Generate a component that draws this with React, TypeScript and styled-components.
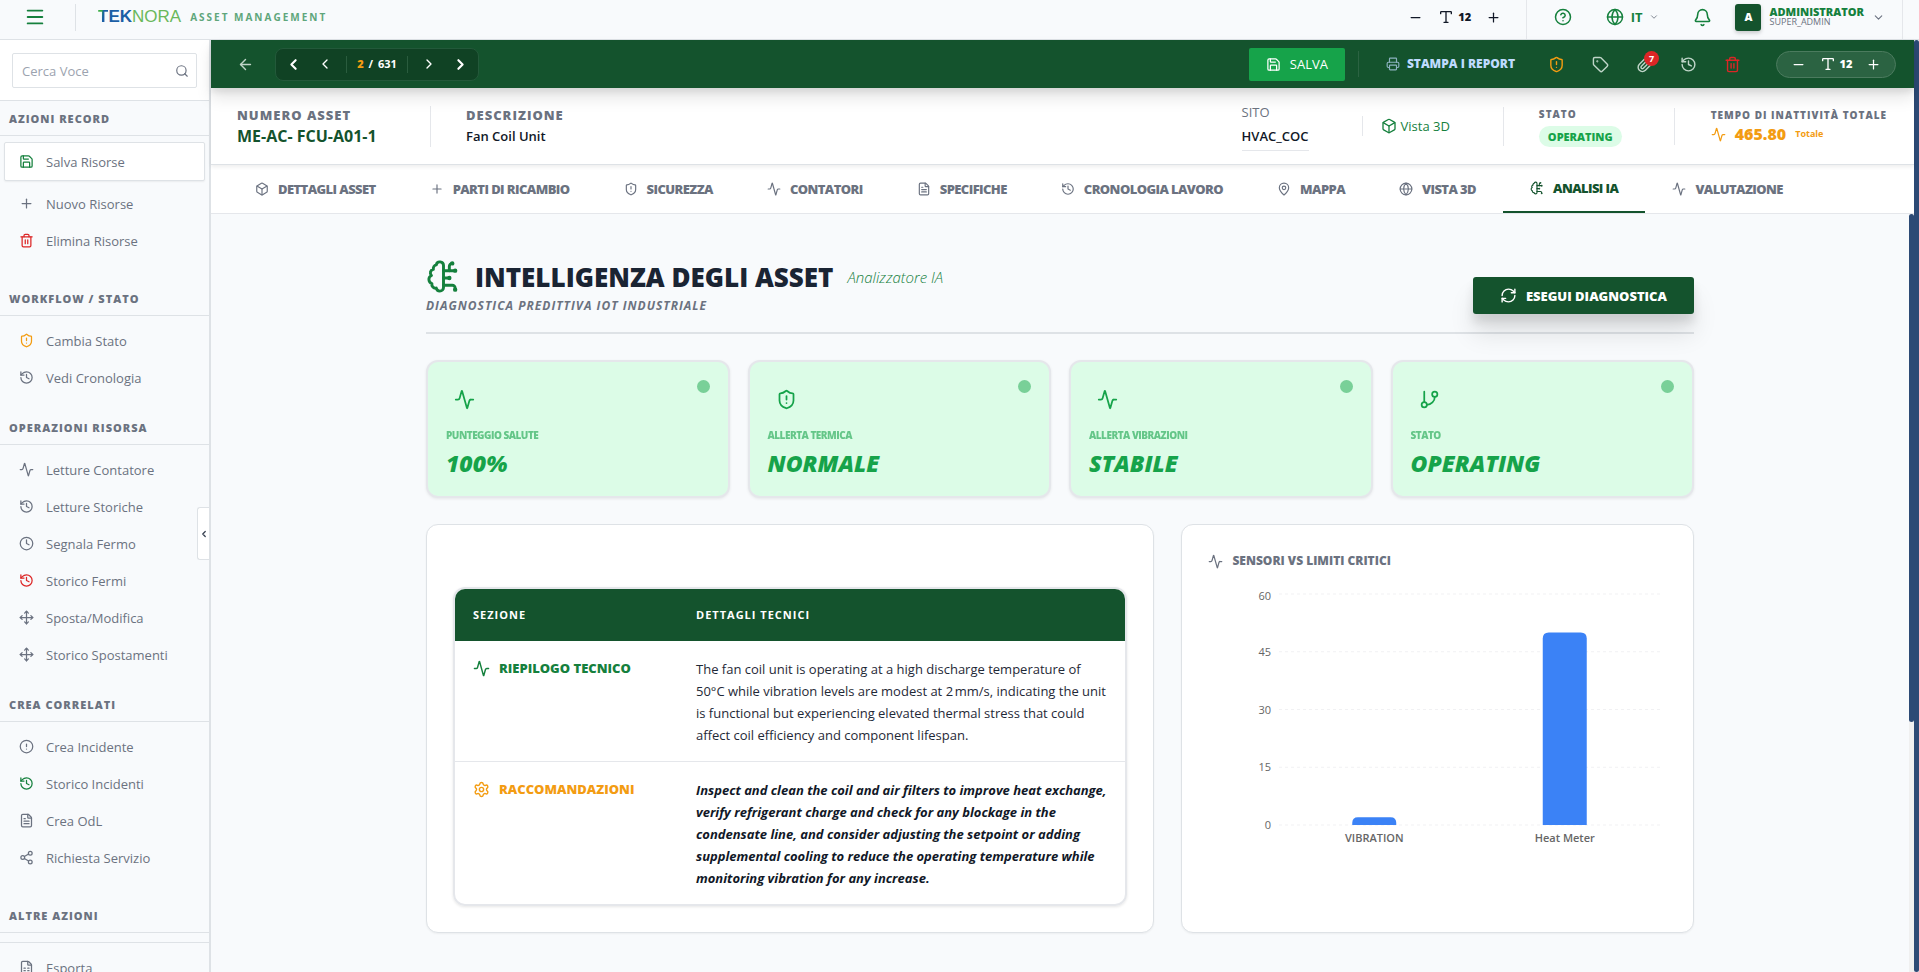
import React from 'react';
import styled, { createGlobalStyle, css } from 'styled-components';
import {
  Activity, ArrowLeft, Bell, Box, ChevronDown, ChevronLeft, ChevronRight, CircleAlert, CircleHelp, Clock,
  FileSpreadsheet, FileText, GitBranch, Globe, History, MapPin, Menu, Minus, Move, Paperclip, Plus,
  Printer, RefreshCw, Save, Search, Settings, Share2, ShieldAlert, Tag, Trash2, Type,
} from 'lucide-react';

const c = {
  deep: '#14532d',
  green: '#15803d',
  bright: '#16a34a',
  mint: '#dcfce7',
  page: '#f8fafc',
  line: '#dee2e6',
  soft: '#e5e7eb',
  muted: '#6b7280',
  ink: '#111827',
  amber: '#f39c12',
  red: '#dc2626',
  navy: '#2c4a75',
};

const GlobalStyle = createGlobalStyle`
  *, *::before, *::after { box-sizing: border-box; }
  body { margin: 0; background: ${c.page}; color: ${c.ink}; font-family: "Open Sans", sans-serif; font-size: 13px; line-height: 20px; }
  h1, h2, p { margin: 0; }
  button { font: inherit; color: inherit; background: none; border: 0; padding: 0; cursor: pointer; }
  a { color: inherit; text-decoration: none; }
  svg { flex: none; display: block; }
`;

const Shell = styled.div`
  display: flex;
  flex-direction: column;
  height: 100vh;
  overflow: hidden;
`;

/* ---------- top bar ---------- */

const TopBar = styled.header`
  display: flex;
  flex: none;
  height: 40px;
  padding-right: 16px;
  background: ${c.page};
  border-bottom: 1px solid ${c.line};
`;

const Brand = styled.div`
  display: flex;
  align-items: center;
  flex: 1;
  padding: 0 0 5px 24px;
`;

const IconButton = styled.button<{ $color?: string; $size?: number }>`
  display: inline-flex;
  align-items: center;
  justify-content: center;
  position: relative;
  width: ${p => p.$size ?? 22}px;
  height: ${p => p.$size ?? 22}px;
  color: ${p => p.$color ?? 'inherit'};
`;

const Rule = styled.span<{ $h: number; $color?: string; $margin?: string }>`
  flex: none;
  width: 1px;
  height: ${p => p.$h}px;
  margin: ${p => p.$margin ?? 0};
  background: ${p => p.$color ?? c.soft};
`;

const Logo = styled.a`
  display: flex;
  align-items: center;
  gap: 9px;
`;

const LogoWord = styled.span`
  font-family: "Liberation Sans", sans-serif;
  font-size: 17px;
  color: #6ab85a;

  b {
    color: #1b5fa6;
  }

  b:first-child {
    background: linear-gradient(100deg, #3fae49 30%, #1b5fa6 50%);
    background-clip: text;
    color: transparent;
  }
`;

const Tagline = styled.span`
  font-size: 10px;
  font-weight: 700;
  letter-spacing: 2px;
  color: #5fa67b;
`;

const TopGroup = styled.div<{ $pad: string; $gap: number }>`
  display: flex;
  align-items: center;
  gap: ${p => p.$gap}px;
  padding: ${p => p.$pad};
  color: ${c.green};
  border-right: 1px solid ${c.soft};
`;

const SizeControl = styled.div<{ $pill?: boolean }>`
  display: flex;
  align-items: center;
  justify-content: space-between;
  width: 120px;
  height: 27px;
  padding: 0 10px;
  color: ${c.ink};
  ${p => p.$pill && css`
    color: #fff;
    background: #2b6342;
    border: 1px solid #4b7b5e;
    border-radius: 14px;
  `}
`;

const SizeValue = styled.span`
  display: flex;
  align-items: center;
  gap: 4px;
  font-size: 11px;
  font-weight: 800;
`;

const Language = styled.button`
  display: flex;
  align-items: center;
  gap: 7px;
  margin: 0 10px;
  font-weight: 700;

  svg:last-child { color: ${c.muted}; }
`;

const User = styled.button`
  display: flex;
  align-items: center;
  gap: 8px;
  text-align: left;

  > svg { color: ${c.muted}; }
`;

const Avatar = styled.span`
  display: grid;
  place-items: center;
  width: 26px;
  height: 27px;
  border-radius: 3px;
  background: ${c.deep};
  color: #fff;
  font-size: 11px;
  font-weight: 800;
  box-shadow: 0 2px 4px rgba(0, 0, 0, 0.2);
`;

const UserName = styled.span`
  display: grid;
  font-size: 11px;
  line-height: 10px;
  font-weight: 800;

  small {
    font-size: 9px;
    font-weight: 500;
    color: ${c.muted};
  }
`;

/* ---------- sidebar ---------- */

const Body = styled.div`
  display: flex;
  flex: 1;
  min-height: 0;
`;

const Sidebar = styled.aside`
  position: relative;
  flex: none;
  width: 211px;
  overflow: hidden;
  border-right: 2px solid ${c.line};
  background: ${c.page};
`;

const SearchPanel = styled.div`
  padding: 13px 12px 12px;
  background: #fff;
  border-bottom: 1px solid ${c.line};
`;

const SearchField = styled.label`
  display: flex;
  align-items: center;
  height: 35px;
  padding: 0 7px 0 9px;
  border: 1px solid ${c.line};
  border-radius: 2px;
  color: ${c.muted};

  input {
    flex: 1;
    min-width: 0;
    padding: 0;
    border: 0;
    outline: 0;
    background: none;
    font: inherit;
  }

  input::placeholder { color: #9ca3af; }
`;

const GroupTitle = styled.h2`
  height: 35px;
  padding: 0 9px;
  border-bottom: 1px solid ${c.line};
  color: ${c.muted};
  font-size: 11px;
  line-height: 35px;
  font-weight: 800;
  letter-spacing: 1px;
`;

const GroupList = styled.div<{ $roomy?: boolean }>`
  display: flex;
  flex-direction: column;
  padding: 6px 4px ${p => (p.$roomy ? 22 : 14)}px 4px;
`;

const GroupDivider = styled.hr`
  margin: 9px 0 0;
  border: 0;
  border-top: 1px solid ${c.line};
`;

const SideItem = styled.button<{ $active?: boolean }>`
  display: flex;
  align-items: center;
  gap: 12px;
  height: 37px;
  padding: 0 14px;
  border: 1px solid transparent;
  color: ${c.muted};
  font-weight: 500;

  ${p => p.$active && css`
    height: 39px;
    margin-bottom: 4px;
    background: #fff;
    border-color: ${c.line};
    border-radius: 2px;
    box-shadow: 0 1px 2px rgba(0, 0, 0, 0.06);
  `}
`;

const Collapse = styled.button`
  position: absolute;
  right: 0;
  top: 467px;
  display: grid;
  place-items: center;
  width: 12px;
  height: 53px;
  background: #fff;
  border: 1px solid ${c.line};
  border-right: 0;
  border-radius: 3px 0 0 3px;
  color: #374151;
`;

/* ---------- record header ---------- */

const Main = styled.main`
  display: flex;
  flex-direction: column;
  flex: 1;
  min-width: 0;
`;

const ActionBar = styled.div`
  position: relative;
  z-index: 2;
  display: flex;
  align-items: center;
  flex: none;
  height: 48px;
  padding: 0 18px 0 25px;
  background: ${c.deep};
  color: #bfd5c8;
  box-shadow: 0 10px 15px rgba(0, 0, 0, 0.1), 0 4px 6px rgba(0, 0, 0, 0.08);
`;

const Pager = styled.div`
  display: flex;
  align-items: center;
  justify-content: space-between;
  width: 204px;
  height: 33px;
  margin-left: 21px;
  padding: 0 6px;
  border: 1px solid #23593a;
  border-radius: 8px;
  background: #104224;
  color: #fff;
`;

const PageCount = styled.span`
  font-size: 11px;
  font-weight: 700;
  word-spacing: 2px;

  b { color: ${c.amber}; }
`;

const Spacer = styled.div`
  flex: 1;
`;

const SaveButton = styled.button`
  display: flex;
  align-items: center;
  gap: 9px;
  height: 33px;
  padding: 0 17px;
  border-radius: 2px;
  background: ${c.bright};
  color: #fff;
`;

const ReportLink = styled.a`
  display: flex;
  align-items: center;
  gap: 7px;
  font-size: 12px;
  font-weight: 800;
  color: #bfdbfe;

  svg { opacity: 0.7; }
`;

const ActionIcons = styled.div`
  display: flex;
  gap: 22px;
  margin: 0 33px 0 30px;
`;

const Badge = styled.span`
  position: absolute;
  top: -2px;
  right: -4px;
  width: 15px;
  height: 15px;
  border-radius: 50%;
  background: ${c.red};
  color: #fff;
  font-size: 9px;
  line-height: 15px;
  font-weight: 700;
`;

const InfoBar = styled.section`
  position: relative;
  z-index: 1;
  display: flex;
  align-items: center;
  flex: none;
  height: 77px;
  padding: 0 27px 0 26px;
  background: #fff;
  border-bottom: 1px solid ${c.line};
  box-shadow: 0 2px 4px rgba(0, 0, 0, 0.07);
`;

const Field = styled.div<{ $w?: number }>`
  display: flex;
  flex-direction: column;
  align-items: flex-start;
  ${p => p.$w && css`width: ${p.$w}px;`}
`;

const FieldName = styled.span<{ $small?: boolean; $plain?: boolean }>`
  font-size: ${p => (p.$small ? 10 : 13)}px;
  line-height: ${p => (p.$small ? 16 : 20)}px;
  font-weight: ${p => (p.$plain ? 500 : 800)};
  letter-spacing: ${p => (p.$plain ? 0 : 1)}px;
  color: ${c.muted};
`;

const AssetCode = styled.span`
  font-size: 16px;
  line-height: 22px;
  font-weight: 700;
  color: ${c.deep};
`;

const FieldValue = styled.span<{ $underlined?: boolean }>`
  font-size: 13px;
  line-height: 22px;
  font-weight: 600;
  ${p => p.$underlined && css`
    padding: 3px 0;
    border-bottom: 1px solid ${c.soft};
  `}
`;

const View3d = styled.a`
  display: flex;
  align-items: center;
  gap: 4px;
  color: ${c.green};
`;

const StatusPill = styled.span`
  margin-top: 4px;
  padding: 0 9px;
  border-radius: 11px;
  background: ${c.mint};
  color: ${c.bright};
  font-size: 11px;
  line-height: 21px;
  font-weight: 800;
`;

const Downtime = styled.span`
  display: flex;
  align-items: center;
  gap: 9px;
  color: ${c.amber};
  font-size: 16px;
  line-height: 22px;
  font-weight: 800;

  small {
    font-size: 9px;
    font-weight: 700;
  }
`;

const Tabs = styled.nav`
  display: flex;
  flex: none;
  height: 49px;
  padding: 0 17px;
  background: #fff;
  border-bottom: 1px solid ${c.soft};
`;

const Tab = styled.button<{ $active?: boolean }>`
  display: flex;
  align-items: center;
  gap: 9px;
  padding: 0 27px;
  color: ${p => (p.$active ? c.deep : c.muted)};
  font-weight: 800;
  letter-spacing: -0.045em;
  white-space: nowrap;
  ${p => p.$active && css`border-bottom: 2px solid ${c.deep};`}
`;

/* ---------- content ---------- */

const Scroller = styled.div`
  display: flex;
  flex: 1;
  min-height: 0;
`;

const Content = styled.div`
  flex: 1;
  min-width: 0;
  overflow: hidden;
  padding: 45px 24px 0;
`;

const Track = styled.div`
  flex: none;
  width: 5px;
  background: #f0f0f0;
`;

const Thumb = styled.div<{ $share: number }>`
  width: 5px;
  height: ${p => p.$share}%;
  border-radius: 3px;
  background: ${c.navy};
`;

const Container = styled.div`
  display: flex;
  flex-direction: column;
  max-width: 1268px;
  margin: 0 auto;
`;

const Heading = styled.header`
  display: flex;
  align-items: flex-end;
  justify-content: space-between;
  height: 75px;
  margin-bottom: 26px;
  padding-bottom: 18px;
  border-bottom: 2px solid ${c.line};
`;

const TitleRow = styled.div`
  display: flex;
  align-items: center;
  gap: 14px;
  height: 43px;
  color: ${c.green};
`;

const Title = styled.h1`
  font-size: 26px;
  line-height: 34px;
  font-weight: 800;
  color: #1a2433;
`;

const TitleNote = styled.i`
  font-size: 15px;
  font-weight: 300;
`;

const Subtitle = styled.p`
  font-size: 12px;
  line-height: 16px;
  font-weight: 700;
  font-style: italic;
  letter-spacing: 1px;
  color: ${c.muted};
`;

const RunButton = styled.button`
  display: flex;
  align-items: center;
  gap: 9px;
  height: 37px;
  padding: 0 27px;
  border-radius: 3px;
  background: ${c.deep};
  color: #fff;
  font-weight: 800;
  box-shadow: 0 20px 25px rgba(0, 0, 0, 0.1), 0 8px 10px rgba(0, 0, 0, 0.1);
`;

const Cards = styled.div`
  display: grid;
  grid-template-columns: repeat(4, 1fr);
  gap: 18px;
  margin-bottom: 26px;
`;

const Card = styled.article`
  display: flex;
  flex-direction: column;
  height: 138px;
  padding: 18px;
  border: 2px solid ${c.soft};
  border-radius: 12px;
  background: ${c.mint};
  color: ${c.bright};
  box-shadow: 0 1px 3px rgba(0, 0, 0, 0.08);
`;

const CardTop = styled.div`
  display: flex;
  justify-content: space-between;
  padding-left: 8px;
  height: 40px;

  > svg { margin-top: 9px; }
`;

const Dot = styled.span`
  width: 13px;
  height: 13px;
  border-radius: 50%;
  background: ${c.bright};
  opacity: 0.5;
`;

const CardLabel = styled.span`
  margin-top: 8px;
  font-size: 10px;
  line-height: 14px;
  font-weight: 800;
  letter-spacing: -0.05em;
  opacity: 0.6;
`;

const CardValue = styled.span`
  margin-top: 6px;
  font-size: 23px;
  line-height: 30px;
  font-weight: 800;
  font-style: italic;
`;

const Panels = styled.div`
  display: grid;
  grid-template-columns: repeat(12, 1fr);
  gap: 27px;
`;

const Panel = styled.section<{ $span: number }>`
  grid-column: span ${p => p.$span};
  padding: 26px;
  background: #fff;
  border: 1px solid ${c.line};
  border-radius: 12px;
  box-shadow: 0 1px 2px rgba(0, 0, 0, 0.05);
`;

const TableFrame = styled.div`
  margin-top: 36px;
  overflow: hidden;
  border: 2px solid ${c.soft};
  border-radius: 12px;
  box-shadow: 0 1px 3px rgba(0, 0, 0, 0.1);
`;

const Report = styled.table`
  width: 100%;
  border-collapse: collapse;
  table-layout: fixed;

  th, td {
    padding: 17px 15px 15px 18px;
    text-align: left;
    vertical-align: top;
    line-height: 22px;
  }

  thead th {
    padding: 15px 18px;
    background: ${c.deep};
    color: #fff;
    font-size: 11px;
    font-weight: 700;
    letter-spacing: 1px;
  }

  thead th:first-child { width: 223px; }

  tbody tr + tr { border-top: 1px solid ${c.soft}; }
`;

const SectionName = styled.span<{ $color: string }>`
  display: flex;
  align-items: center;
  gap: 9px;
  color: ${p => p.$color};
  font-size: 13px;
  line-height: 20px;
  font-weight: 800;
`;

const Detail = styled.td<{ $strong?: boolean }>`
  color: ${p => (p.$strong ? c.ink : '#1f2937')};
  font-weight: ${p => (p.$strong ? 700 : 400)};
  font-style: ${p => (p.$strong ? 'italic' : 'normal')};
`;

const ChartTitle = styled.h2`
  display: flex;
  align-items: center;
  gap: 9px;
  height: 20px;
  margin-bottom: 10px;
  font-size: 12px;
  font-weight: 800;
  color: ${c.muted};
`;

const Chart = styled.svg`
  max-width: 100%;
  font-size: 11px;
  fill: #666;
`;

const InfoGap = styled.span<{ $w: number }>`
  flex: none;
  width: ${p => p.$w}px;
`;

type IconType = React.ComponentType<{ size?: number; color?: string }>;

/* half brain outline with circuit branches on its right side */
function BrainCircuit({ size = 24, color = 'currentColor' }: { size?: number; color?: string }) {
  return (
    <svg
      width={size} height={size} viewBox="0 0 24 24" fill="none" stroke={color} strokeWidth="2"
      strokeLinecap="round" strokeLinejoin="round" aria-hidden="true"
    >
      <path d="M12 4.5a2.5 2.5 0 0 0-4.96-.46 2.5 2.5 0 0 0-1.98 3 2.5 2.5 0 0 0-1.32 4.24 3 3 0 0 0 .34 5.58 2.5 2.5 0 0 0 2.96 3.08A2.5 2.5 0 0 0 9.5 22 2.5 2.5 0 0 0 12 19.5V4.5Z" />
      <path d="M16 8V5c0-1.1.9-2 2-2" />
      <path d="M12 13h4" />
      <path d="M12 18h6a2 2 0 0 1 2 2v1" />
      <path d="M12 8h8" />
      <circle cx="20" cy="8" r=".5" />
      <circle cx="16" cy="13" r=".5" />
      <circle cx="20" cy="21" r=".5" />
      <circle cx="18" cy="3" r=".5" />
    </svg>
  );
}

interface SideEntry { icon: IconType; text: string; color?: string; active?: boolean }
interface SideGroup { title: string; items: SideEntry[]; roomy?: boolean; divided?: boolean }

const groups: SideGroup[] = [
  {
    title: 'AZIONI RECORD',
    roomy: true,
    items: [
      { icon: Save, text: 'Salva Risorse', color: c.green, active: true },
      { icon: Plus, text: 'Nuovo Risorse' },
      { icon: Trash2, text: 'Elimina Risorse', color: c.red },
    ],
  },
  {
    title: 'WORKFLOW / STATO',
    items: [
      { icon: ShieldAlert, text: 'Cambia Stato', color: c.amber },
      { icon: History, text: 'Vedi Cronologia' },
    ],
  },
  {
    title: 'OPERAZIONI RISORSA',
    items: [
      { icon: Activity, text: 'Letture Contatore' },
      { icon: History, text: 'Letture Storiche' },
      { icon: Clock, text: 'Segnala Fermo' },
      { icon: History, text: 'Storico Fermi', color: c.red },
      { icon: Move, text: 'Sposta/Modifica' },
      { icon: Move, text: 'Storico Spostamenti' },
    ],
  },
  {
    title: 'CREA CORRELATI',
    roomy: true,
    items: [
      { icon: CircleAlert, text: 'Crea Incidente' },
      { icon: History, text: 'Storico Incidenti', color: c.green },
      { icon: FileText, text: 'Crea OdL' },
      { icon: Share2, text: 'Richiesta Servizio' },
    ],
  },
  { title: 'ALTRE AZIONI', divided: true, items: [{ icon: FileSpreadsheet, text: 'Esporta' }] },
];

const tabs: { icon: IconType; text: string }[] = [
  { icon: Box, text: 'DETTAGLI ASSET' },
  { icon: Plus, text: 'PARTI DI RICAMBIO' },
  { icon: ShieldAlert, text: 'SICUREZZA' },
  { icon: Activity, text: 'CONTATORI' },
  { icon: FileText, text: 'SPECIFICHE' },
  { icon: History, text: 'CRONOLOGIA LAVORO' },
  { icon: MapPin, text: 'MAPPA' },
  { icon: Globe, text: 'VISTA 3D' },
  { icon: BrainCircuit, text: 'ANALISI IA' },
  { icon: Activity, text: 'VALUTAZIONE' },
];

const metrics: { icon: IconType; label: string; value: string }[] = [
  { icon: Activity, label: 'PUNTEGGIO SALUTE', value: '100%' },
  { icon: ShieldAlert, label: 'ALLERTA TERMICA', value: 'NORMALE' },
  { icon: Activity, label: 'ALLERTA VIBRAZIONI', value: 'STABILE' },
  { icon: GitBranch, label: 'STATO', value: 'OPERATING' },
];

const sensors = [
  { name: 'VIBRATION', value: 2 },
  { name: 'Heat Meter', value: 50 },
];

function FontSize({ pill }: { pill?: boolean }) {
  return (
    <SizeControl $pill={pill}>
      <IconButton aria-label="Riduci testo"><Minus size={15} /></IconButton>
      <SizeValue><Type size={16} />12</SizeValue>
      <IconButton aria-label="Ingrandisci testo"><Plus size={15} /></IconButton>
    </SizeControl>
  );
}

function SensorChart() {
  const left = 71, top = 13, plotW = 381, plotH = 231, max = 60, barW = 44;
  const y = (v: number) => top + plotH - (v / max) * plotH;
  const step = plotW / sensors.length;
  return (
    <Chart width="456" height="280" viewBox="0 0 456 280" role="img" aria-label="Sensori vs limiti critici">
      {[0, 15, 30, 45, 60].map(v => (
        <g key={v}>
          <line x1={left} x2={left + plotW} y1={y(v)} y2={y(v)} stroke="#f1f1f3" strokeDasharray="3 3" />
          <text x={left - 8} y={y(v) + (v === max ? 6 : 4)} textAnchor="end">{v}</text>
        </g>
      ))}
      {sensors.map((s, i) => {
        const mid = left + step * (i + 0.5);
        const r = Math.min(6, y(0) - y(s.value) - 2);
        return (
          <g key={s.name}>
            <path
              fill="#3b82f6"
              d={`M${mid - barW / 2} ${y(0)}V${y(s.value) + r}q0 ${-r} ${r} ${-r}h${barW - 2 * r}q${r} 0 ${r} ${r}V${y(0)}z`}
            />
            <text x={mid} y={y(0) + 17} textAnchor="middle" fontWeight="600">{s.name}</text>
          </g>
        );
      })}
    </Chart>
  );
}

export default function App() {
  return (
    <Shell>
      <GlobalStyle />
      <TopBar>
        <Brand>
          <IconButton $color={c.green} aria-label="Menu"><Menu size={22} /></IconButton>
          <Rule $h={27} $color={c.line} $margin="0 22px 0 29px" />
          <Logo href="#">
            <LogoWord><b>T</b><b>EK</b>NORA</LogoWord>
            <Tagline>ASSET MANAGEMENT</Tagline>
          </Logo>
        </Brand>
        <TopGroup $pad="0 11px 5px 0" $gap={0}>
          <FontSize />
        </TopGroup>
        <TopGroup $pad="0 17px 5px 25px" $gap={22}>
          <IconButton aria-label="Aiuto"><CircleHelp size={18} /></IconButton>
          <Language><Globe size={18} />IT<ChevronDown size={10} /></Language>
          <IconButton aria-label="Notifiche"><Bell size={19} /></IconButton>
          <User>
            <Avatar>A</Avatar>
            <UserName>ADMINISTRATOR<small>SUPER_ADMIN</small></UserName>
            <ChevronDown size={13} />
          </User>
        </TopGroup>
      </TopBar>
      <Body>
        <Sidebar>
          <SearchPanel>
            <SearchField>
              <input type="text" placeholder="Cerca Voce" aria-label="Cerca Voce" />
              <Search size={14} />
            </SearchField>
          </SearchPanel>
          {groups.map(g => (
            <section key={g.title}>
              <GroupTitle>{g.title}</GroupTitle>
              {g.divided && <GroupDivider />}
              <GroupList $roomy={g.roomy}>
                {g.items.map(({ icon: Icon, text, color, active }) => (
                  <SideItem key={text} $active={active}><Icon size={15} color={color} />{text}</SideItem>
                ))}
              </GroupList>
            </section>
          ))}
          <Collapse aria-label="Comprimi"><ChevronLeft size={10} strokeWidth={3} /></Collapse>
        </Sidebar>
        <Main>
          <ActionBar>
            <IconButton $size={18} aria-label="Indietro"><ArrowLeft size={17} /></IconButton>
            <Pager>
              <IconButton aria-label="Primo"><ChevronLeft size={17} strokeWidth={3} /></IconButton>
              <IconButton aria-label="Precedente"><ChevronLeft size={16} /></IconButton>
              <Rule $h={17} $color="#2a5c3e" />
              <PageCount><b>2</b> / 631</PageCount>
              <Rule $h={17} $color="#2a5c3e" />
              <IconButton aria-label="Successivo"><ChevronRight size={16} /></IconButton>
              <IconButton aria-label="Ultimo"><ChevronRight size={17} strokeWidth={3} /></IconButton>
            </Pager>
            <Spacer />
            <SaveButton><Save size={15} />SALVA</SaveButton>
            <Rule $h={26} $color="#2b6342" $margin="0 27px 0 13px" />
            <ReportLink href="#"><Printer size={14} />STAMPA I REPORT</ReportLink>
            <ActionIcons>
              <IconButton $color={c.amber} aria-label="Avviso"><ShieldAlert size={17} /></IconButton>
              <IconButton aria-label="Etichetta"><Tag size={17} /></IconButton>
              <IconButton aria-label="Allegati"><Paperclip size={17} /><Badge>7</Badge></IconButton>
              <IconButton aria-label="Cronologia"><History size={17} /></IconButton>
              <IconButton $color={c.red} aria-label="Elimina"><Trash2 size={17} /></IconButton>
            </ActionIcons>
            <FontSize pill />
          </ActionBar>
          <InfoBar>
            <Field $w={193}>
              <FieldName>NUMERO ASSET</FieldName>
              <AssetCode>ME-AC- FCU-A01-1</AssetCode>
            </Field>
            <Rule $h={41} />
            <InfoGap $w={35} />
            <Field>
              <FieldName>DESCRIZIONE</FieldName>
              <FieldValue>Fan Coil Unit</FieldValue>
            </Field>
            <Spacer />
            <Field>
              <FieldName $plain>SITO</FieldName>
              <FieldValue $underlined>HVAC_COC</FieldValue>
            </Field>
            <InfoGap $w={53} />
            <Rule $h={20} />
            <InfoGap $w={18} />
            <View3d href="#"><Box size={16} />Vista 3D</View3d>
            <InfoGap $w={53} />
            <Rule $h={39} />
            <InfoGap $w={35} />
            <Field>
              <FieldName $small>STATO</FieldName>
              <StatusPill>OPERATING</StatusPill>
            </Field>
            <InfoGap $w={52} />
            <Rule $h={37} />
            <InfoGap $w={36} />
            <Field>
              <FieldName $small>TEMPO DI INATTIVITÀ TOTALE</FieldName>
              <Downtime><Activity size={15} />465.80<small>Totale</small></Downtime>
            </Field>
          </InfoBar>
          <Tabs>
            {tabs.map(({ icon: Icon, text }) => (
              <Tab key={text} $active={text === 'ANALISI IA'}><Icon size={14} />{text}</Tab>
            ))}
          </Tabs>
          <Scroller>
            <Content>
              <Container>
                <Heading>
                  <div>
                    <TitleRow>
                      <BrainCircuit size={35} />
                      <Title>INTELLIGENZA DEGLI ASSET</Title>
                      <TitleNote>Analizzatore IA</TitleNote>
                    </TitleRow>
                    <Subtitle>DIAGNOSTICA PREDITTIVA IOT INDUSTRIALE</Subtitle>
                  </div>
                  <RunButton><RefreshCw size={17} />ESEGUI DIAGNOSTICA</RunButton>
                </Heading>
                <Cards>
                  {metrics.map(({ icon: Icon, label, value }) => (
                    <Card key={label}>
                      <CardTop><Icon size={21} /><Dot /></CardTop>
                      <CardLabel>{label}</CardLabel>
                      <CardValue>{value}</CardValue>
                    </Card>
                  ))}
                </Cards>
                <Panels>
                  <Panel $span={7}>
                    <TableFrame>
                      <Report>
                        <thead>
                          <tr><th scope="col">SEZIONE</th><th scope="col">DETTAGLI TECNICI</th></tr>
                        </thead>
                        <tbody>
                          <tr>
                            <th scope="row">
                              <SectionName $color={c.green}><Activity size={17} />RIEPILOGO TECNICO</SectionName>
                            </th>
                            <Detail>
                              The fan coil unit is operating at a high discharge temperature of 50°C while vibration
                              levels are modest at 2&#8239;mm/s, indicating the unit is functional but experiencing
                              elevated thermal stress that could affect coil efficiency and component lifespan.
                            </Detail>
                          </tr>
                          <tr>
                            <th scope="row">
                              <SectionName $color={c.amber}><Settings size={17} />RACCOMANDAZIONI</SectionName>
                            </th>
                            <Detail $strong>
                              Inspect and clean the coil and air filters to improve heat exchange, verify refrigerant
                              charge and check for any blockage in the condensate line, and consider adjusting the
                              setpoint or adding supplemental cooling to reduce the operating temperature while
                              monitoring vibration for any increase.
                            </Detail>
                          </tr>
                        </tbody>
                      </Report>
                    </TableFrame>
                  </Panel>
                  <Panel $span={5}>
                    <ChartTitle><Activity size={15} />SENSORI VS LIMITI CRITICI</ChartTitle>
                    <SensorChart />
                  </Panel>
                </Panels>
              </Container>
            </Content>
            <Track aria-hidden="true"><Thumb $share={67} /></Track>
          </Scroller>
        </Main>
        <Track aria-hidden="true"><Thumb $share={100} /></Track>
      </Body>
    </Shell>
  );
}
